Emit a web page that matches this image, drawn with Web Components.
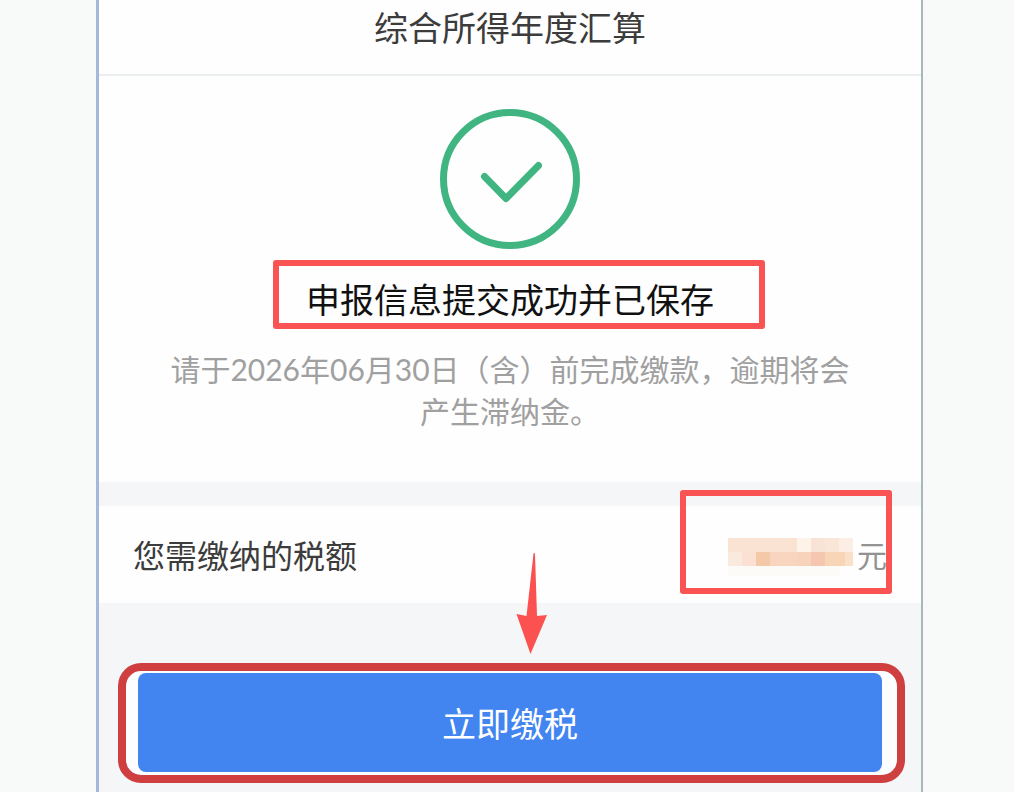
<!DOCTYPE html>
<html lang="zh-CN">
<head>
<meta charset="utf-8">
<meta name="viewport" content="width=device-width, initial-scale=1">
<title>综合所得年度汇算</title>
<style>
  body {
    margin: 0;
    background: #f7faf8;
    font-family: "Noto Sans CJK SC", sans-serif;
    color: #333;
  }
</style>
</head>
<body>
<tax-page>
  <page-header>综合所得年度汇算</page-header>
  <submit-result>
    <span slot="title">申报信息提交成功并已保存</span>
    请于2026年06月30日（含）前完成缴款，逾期将会产生滞纳金。
  </submit-result>
  <amount-row>您需缴纳的税额<span slot="unit">元</span></amount-row>
  <pay-action>立即缴税</pay-action>
</tax-page>

<script>
  const define = (name, html) => {
    const template = document.createElement('template');
    template.innerHTML = html;
    customElements.define(name, class extends HTMLElement {
      constructor() {
        super();
        this.attachShadow({ mode: 'open' }).append(template.content.cloneNode(true));
      }
    });
  };

  // Red outline that marks part of the page
  define('mark-box', `
    <style>
      :host { display: block; box-sizing: border-box; border: 6px solid #f95353; border-radius: 3px; pointer-events: none; }
    </style>`);

  define('tax-page', `
    <style>
      :host { display: block; padding: 0 91px 0 96px; }
      main {
        display: flex; flex-direction: column; box-sizing: border-box; min-height: 100vh;
        background: #f5f6f8; border-left: 3px solid #a5b8da; border-right: 2px solid #a9b6ba;
      }
    </style>
    <main><slot></slot></main>`);

  define('page-header', `
    <style>
      :host { display: block; background: #fefefe; border-bottom: 2px solid #ebeeee; }
      h1 { margin: 0; padding: 3px 0 23px; font-size: 34px; line-height: 48px; font-weight: 400; text-align: center; color: #3c3c3c; }
    </style>
    <h1><slot></slot></h1>`);

  define('submit-result', `
    <style>
      :host { display: flex; flex-direction: column; align-items: center; background: #fefefe; padding: 33px 48px 50px; }
      svg { display: block; }
      h2 { position: relative; margin: 26px 0 0; font-size: 34px; line-height: 48px; font-weight: 400; color: #111; }
      mark-box { position: absolute; inset: -15px -51px -6px -33px; }
      p { margin: 25px 0 0; max-width: 700px; font-family: Lato, "Noto Sans CJK SC", sans-serif; font-size: 30px; line-height: 42px; text-align: center; color: #a0a0a0; }
    </style>
    <svg width="140" height="140" viewBox="0 0 140 140" fill="none" stroke="#40b582" stroke-width="7" aria-hidden="true">
      <circle cx="70" cy="70" r="66.5"/>
      <path d="M44.500 67.500L66 89.500L98.500 56.500" stroke-linecap="round" stroke-linejoin="round"/>
    </svg>
    <h2><slot name="title"></slot><mark-box></mark-box></h2>
    <p><slot></slot></p>`);

  define('amount-row', `
    <style>
      :host { display: flex; align-items: center; justify-content: space-between; position: relative; box-sizing: border-box; margin-top: 24px; height: 97px; padding: 0 34px 2px; background: #fefefe; }
      .label { font-size: 32px; line-height: 48px; color: #3c3c3c; }
      .value { display: flex; align-items: center; gap: 3px; font-size: 30px; line-height: 48px; color: #929292; }
      .value svg { margin-top: 6px; }
      mark-box { position: absolute; top: -16px; bottom: 9px; right: 29px; width: 212px; }
    </style>
    <span class="label"><slot></slot></span>
    <span class="value">
      <svg width="126" height="38" viewBox="0 0 126 38" shape-rendering="crispEdges" aria-hidden="true">
        <path fill="#fae3d2" d="M0 0h69v14H0z"/>
        <path fill="#fae9dd" d="M0 14h14v14H0z"/>
        <path fill="#fbe1d4" d="M14 14h14v14H14z"/>
        <path fill="#f4c9a8" d="M28 14h14v14H28z"/>
        <path fill="#f9d5c0" d="M42 14h27v14H42z"/>
        <path fill="#fdf3e9" d="M69 0h14v14H69z"/>
        <path fill="#f9e2d6" d="M83 0h14v14H83z"/>
        <path fill="#fae6d7" d="M97 0h14v14H97z"/>
        <path fill="#fceee4" d="M111 0h14v14H111z"/>
        <path fill="#f8d3bb" d="M69 14h14v14H69z"/>
        <path fill="#f5c7b0" d="M83 14h14v14H83z"/>
        <path fill="#f9d5b8" d="M97 14h20v14H97z"/>
        <path fill="#fae0c9" d="M117 14h8v14H117z"/>
        <path fill="#fdfbf7" d="M0 28h112v10H0z"/>
      </svg>
      <slot name="unit"></slot>
    </span>
    <mark-box></mark-box>`);

  define('pay-action', `
    <style>
      :host { display: block; position: relative; padding: 60px 16px 9px 19px; }
      .arrow { position: absolute; top: -50px; left: calc(50% + 6px); }
      .frame { border: 8px solid #cf3f3f; border-radius: 23px; padding: 2px 15px 3px 12px; background: #fbfdff; }
      button {
        display: block; width: 100%; margin: 0; padding: 26px 0 25px; border: 0; border-radius: 8px;
        background: #4285f1; color: #fff; font-family: inherit; font-size: 34px; line-height: 48px; cursor: pointer;
      }
    </style>
    <div class="frame"><button type="button"><slot></slot></button></div>
    <svg class="arrow" width="32" height="102" viewBox="0 0 32 102" aria-hidden="true">
      <path d="M17.500 0.500Q18.500 -0.500 19 1L21 63L31 62L14.500 101L0.500 61L10.500 63Z" fill="#fb5151"/>
    </svg>`);
</script>
</body>
</html>
